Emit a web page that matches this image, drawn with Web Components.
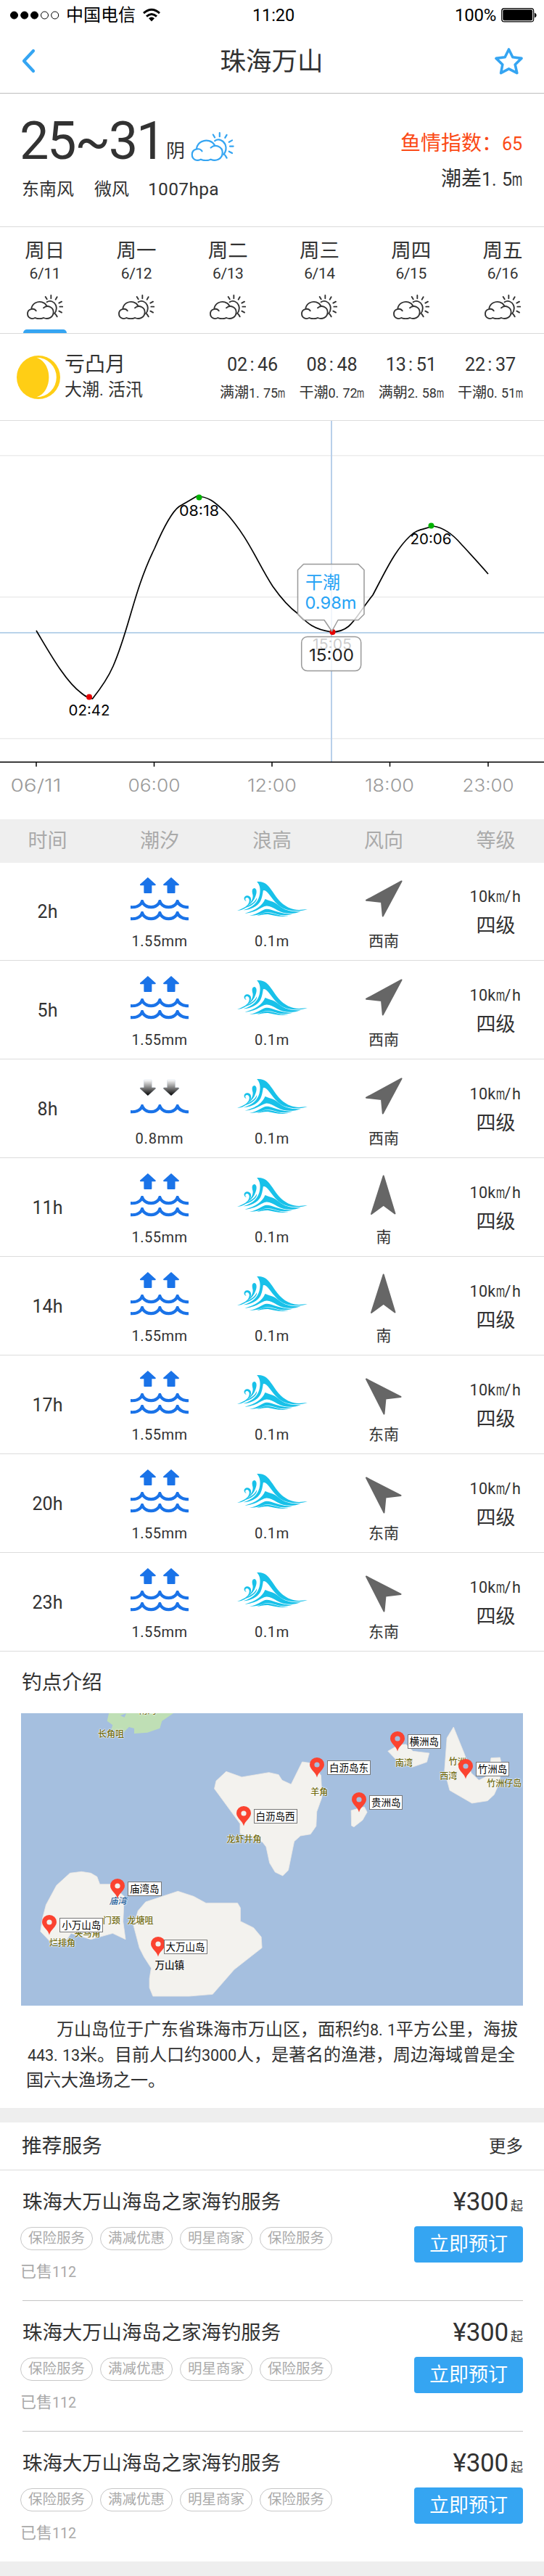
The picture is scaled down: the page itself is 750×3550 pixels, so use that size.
<!DOCTYPE html>
<html lang="zh-CN">
<head>
<meta charset="utf-8">
<title>珠海万山</title>
<style>
html,body{margin:0;padding:0;background:#fff}
body{width:750px;height:3550px;overflow:hidden;font-family:Roboto,"Noto Sans CJK SC",sans-serif;color:#323232}
</style>
</head>
<body>
<tide-page></tide-page>
<script>
const BASE = '*{box-sizing:border-box}svg{display:block}';
const fits = [];
function define(name, render) {
  customElements.define(name, class extends HTMLElement {
    connectedCallback() {
      if (this.shadowRoot) return;
      this.attachShadow({mode: 'open'}).innerHTML = render(this).replace('<style>', '<style>' + BASE);
    }
  });
}

/* Text run: s = size, w = advance width to fit, half = half-width latin glyphs */
customElements.define('ui-text', class extends HTMLElement {
  connectedCallback() {
    if (this.shadowRoot) return;
    const s = +this.getAttribute('s') || 24, c = this.getAttribute('c');
    this.attachShadow({mode: 'open'}).innerHTML =
      `<style>:host{display:block;white-space:pre;font-size:${s}px;line-height:30px;${c ? 'color:' + c : ''}}</style><span><slot></slot></span>`;
    if (this.hasAttribute('half')) {
      const parts = this.textContent.split(/([.:m]|[\x21-\x2d\x2f-\x39\x3b-\x6c\x6e-\x7e]+)/).filter(Boolean);
      this.textContent = '';
      for (const p of parts) {
        if (/^[\x21-\x7e]/.test(p)) {
          const e = document.createElement('span');
          e.textContent = p;
          e.style.fontSize = s * .9 + 'px';
          this.append(e);
          if (p === 'm') {
            e.style.cssText += `;display:inline-block;width:${s / 2}px;transform:scaleX(.64);transform-origin:0 0`;
          } else if (p === ':') {
            e.style.marginLeft = s * .12 + 'px';
            fits.push([e, s * .38, 1]);
          } else fits.push([e, p.length * s / 2, p.length]);
        } else this.append(p);
      }
    } else if (this.hasAttribute('w')) {
      fits.push([this.shadowRoot.querySelector('span'), +this.getAttribute('w'), this.textContent.length, this]);
    }
  }
});

define('status-bar', () => `<style>
:host{display:flex;height:41px;align-items:center;padding:0 10px 0 14px;color:#000}
.l,.r{display:flex;flex:1;align-items:center}.r{justify-content:flex-end;gap:7px}
.wifi{margin-left:10px}.dots{margin-right:9px}
</style>
<div class="l"><svg class="dots" width="68" height="12"><g stroke="#000" stroke-width="1"><circle cx="5.5" cy="6" r="5"/><circle cx="19.7" cy="6" r="5"/><circle cx="33.5" cy="6" r="5"/><circle cx="47.5" cy="6" r="5" fill="none"/><circle cx="61.7" cy="6" r="5" fill="none"/></g></svg>
<ui-text s="24">中国电信</ui-text>
<svg class="wifi" width="24" height="19" viewBox="0 0 24 19" fill="none" stroke="#000" stroke-width="3"><path d="M1 7.2Q12-2.8 23 7.2M5 11.6Q12 5.4 19 11.6"/><path d="M8 14.3Q12 10.8 16 14.3L12 18.6Z" fill="#000" stroke="none"/></svg></div>
<ui-text s="23.5" w="58">11:20</ui-text>
<div class="r"><ui-text s="24" w="57">100%</ui-text>
<svg width="49" height="20" viewBox="0 0 49 20"><rect x=".7" y=".7" width="44" height="18.2" rx="3.5" fill="none" stroke="#000" stroke-width="1.2"/><rect x="2.3" y="2.3" width="40.8" height="15" rx="2" /><path d="M46 6.5Q48.7 7.5 48.7 10T46 13.5Z"/></svg></div>`);

define('nav-bar', () => `<style>
:host{display:flex;height:88px;align-items:center;justify-content:space-between;padding:0 29px 2px 30px;border-bottom:1px solid #bdbdbd}
.t{margin-top:3px}
</style>
<svg width="38" height="34" viewBox="0 0 38 34" fill="none" stroke="#35a5f2" stroke-width="4.2" stroke-linecap="round" stroke-linejoin="round"><path d="M16 3L3 17L16 31"/></svg>
<ui-text class="t" s="35.5">珠海万山</ui-text>
<svg width="40" height="38" viewBox="0 0 40 38" fill="none" stroke="#35a5f2" stroke-width="3.6" stroke-linejoin="round"><path d="M20.5 3L25.8 13.8L38 15.4L29.2 24L31.8 35.6L20.5 29.8L9.6 35.6L11.8 24L3 15.4L15.2 13.8Z"/></svg>`);

define('cloud-icon', el => `<style>:host{display:block;width:50px;height:34px}</style>
<svg width="100%" height="100%" viewBox="78 30 150 102" fill="none" stroke="currentColor" stroke-width="5.6" stroke-linecap="round">
<path d="M116 97C108 84 81 88 81 109C81 128 100 133 112 126C122 131 138 131 147 126C165 134 188 125 188 102C188 82 163 70 147 85M97 87C101 65 124 56 141 61C151 64 157 70 160 76"/>
<path d="M161 61C175 51 192 60 198 74C203 88 200 99 192 109M155 39L161 49M178 33V46M203 40L197 50M222 59L211 65M226 80H214M222 104L211 98M203 121L197 111"/></svg>`);

define('weather-summary', () => `<style>
:host{display:flex;justify-content:space-between;height:184px;padding:38px 30px 0 30px;border-bottom:1px solid #dadada}
.t{display:flex;align-items:flex-end;height:55px}.t ui-text:first-child{line-height:55px;margin-left:-3px}
.y{margin:0 8px -1px 3px;}
cloud-icon{width:60px;height:40px;color:#35a5f2;}
.w{display:flex;margin-top:24px;}
.r{display:flex;flex-direction:column;align-items:flex-end;padding-top:16px;gap:18px}
</style>
<div><div class="t"><ui-text s="72" w="199">25~31</ui-text><ui-text class="y" s="26">阴</ui-text><cloud-icon></cloud-icon></div>
<div class="w"><ui-text s="24" style="width:100px">东南风</ui-text><ui-text s="24" style="width:74px">微风</ui-text><ui-text s="24.5" w="98">1007hpa</ui-text></div></div>
<div class="r"><ui-text s="28" half c="#fb4a16">鱼情指数：65</ui-text><ui-text s="28" half>潮差1.5m</ui-text></div>`);

define('day-tab', el => `<style>
:host{display:flex;flex-direction:column;align-items:center;height:146px;padding-top:18px}
cloud-icon{margin-top:14px}.d{margin-top:1px}
i{display:block;width:60px;height:6px;margin-top:14px;border-radius:5px 5px 0 0;background:${el.hasAttribute('on') ? '#35a5f2' : 'none'}}
</style><ui-text s="27.5"><slot></slot></ui-text><ui-text class="d" s="21" w="42.5">${el.getAttribute('date')}</ui-text><cloud-icon></cloud-icon><i></i>`);

define('day-tabs', () => `<style>
:host{display:block;height:147px;border-bottom:1px solid #dadada;overflow:hidden}
div{display:grid;grid-template-columns:repeat(6,1fr);margin:0 -6px 0 -1.3px}
</style><div>${'日一二三四五'.split('').map((d, i) => `<day-tab date="6/${11 + i}" ${i ? '' : 'on'}>周${d}</day-tab>`).join('')}</div>`);

define('moon-row', () => `<style>
:host{display:flex;height:119px;padding:28px 29px 0 23px}
svg{margin-top:2px}
.n{margin-left:6px;flex:1}.n ui-text+ui-text{margin-top:4px}
.x{display:flex;gap:19.3px}.x div{display:flex;flex-direction:column;align-items:center;gap:8px;margin-top:-1px}
</style>
<svg width="60" height="60" viewBox="0 0 60 60"><circle cx="30" cy="30" r="30" fill="#ffce15"/><path d="M27.500 2.700A27.300 27.300 0 0 1 27.500 57.300C50 50 50 10 27.500 2.700Z" fill="#fff"/></svg>
<div class="n"><ui-text s="28">亏凸月</ui-text><ui-text s="24" half>大潮.活汛</ui-text></div>
<div class="x">${[['02:46', '满潮1.75m'], ['08:48', '干潮0.72m'], ['13:51', '满朝2.58m'], ['22:37', '干潮0.51m']].map(([a, b]) => `<div><ui-text s="28" half>${a}</ui-text><ui-text s="20" half>${b}</ui-text></div>`).join('')}</div>`);

define('tide-chart', () => {
  const lab = (x, y, t, w, s = 20, c = '#000', f = '') => `<text x="${x - w / 2}" y="${y}" font-size="${s}" textLength="${w}" lengthAdjust="spacingAndGlyphs" fill="${c}" ${f}>${t}</text>`;
  return `<style>:host{display:block;height:550px}text{font-family:Inter,"Noto Sans CJK SC",sans-serif}</style>
<svg width="750" height="550" viewBox="0 579 750 550">
<g fill="#ececec"><rect y="579" width="750" height="1" fill="#dcdcdc"/><rect y="627" width="750" height="1.500"/><rect y="822" width="750" height="1.500"/><rect y="1017" width="750" height="1.500"/></g>
<rect y="871" width="750" height="2" fill="#b9d3ea"/><rect x="456" y="580" width="2" height="470" fill="#b8cfea"/>
<path d="M50 869C68 899 90 939 112 955Q119 961 123 961L127.500 963C137 951 149 934 156 918C178 868 184 815 213 756C225 728 236 706 247 698L271 684C288 684 297 693 310 705C343 741 354 774 376 808C390 828 400 838 411 846C423 858 431 867 457 871C485 871 489 851 514 820C531 788 544 759 565 739C575 729 583 730 597 725C612 727 624 736 636 750C648 763 661 777 673 791" fill="none" stroke="#000" stroke-width="1.700" stroke-linejoin="round"/>
<g fill="#00b200"><circle cx="274.500" cy="685.500" r="4"/><circle cx="594.500" cy="724.500" r="4"/></g><g fill="#e60000"><circle cx="123" cy="960.500" r="4"/><circle cx="458.500" cy="871" r="4"/></g>
${lab(123, 986, '02:42', 57)}${lab(274.5, 711, '08:18', 55)}${lab(594, 750, '20:06', 57)}${lab(458, 895, '15:05', 54)}
<g fill="#fff" fill-opacity=".8" stroke="#999" stroke-width="1.500"><path d="M418.500 777.500H494L502 785.500V846.500L494 854.500H466L457.500 870L447 854.500H418.500L410.500 846.500V785.500Z" stroke-linejoin="round"/><rect x="415.700" y="877.500" width="82" height="47" rx="8"/></g>
<text x="421" y="811" font-size="24" fill="#26a3f5">干潮</text>${lab(456, 838.5, '0.98m', 71, 23.5, '#26a3f5')}${lab(457, 910.500, '15:00', 62, 23, '#222')}
<path d="M0 1050.300H750M50 1050V1056.500M212.500 1050V1056.500M375 1050V1056.500M537.500 1050V1056.500M673 1050V1056.500" stroke="#000" stroke-width="1.500" fill="none"/>
${[[49.5, '06/11', 70], [212.5, '06:00', 72], [375, '12:00', 68], [537, '18:00', 68], [673, '23:00', 71]].map(([x, t, w]) => lab(x, 1090.500, t, w, 23.5, '#9a9a9a', 'font-weight="300"')).join('')}
</svg>`;
});

const COLS = 'display:grid;grid-template-columns:131px 178px 132px 176px 133px;justify-items:center;';
define('table-head', () => `<style>:host{${COLS}height:60px;margin-bottom:-1px;align-items:center;background:#efefef;color:#aaa}</style>
${['时间', '潮汐', '浪高', '风向', '等级'].map(t => `<ui-text s="27">${t}</ui-text>`).join('')}`);

const ARROW = 'M101.500 27L134 56Q136 61 130 61H118V90Q118 93 115 93H88Q85 93 85 90V61H73Q67 61 69 56Z';
const SWELL = 'M30 144Q66 148 74 120H82Q90 144 115 144Q139 144 147 120H155Q163 144 187 144Q212 144 220 120H228Q236 144 270 145V156.500Q240 157 224 140Q210 156.500 187 156.500Q165 156.500 151 140Q137 156.500 115 156.500Q92 156.500 78 140Q62 158 30 156.500Z';
define('tide-icon', el => {
  const down = el.hasAttribute('falling');
  const arrows = down
    ? '<defs><linearGradient id="g" x1="0" y1="1" x2="0" y2="0"><stop offset="0" stop-color="#fff"/><stop offset="1" stop-color="#000"/></linearGradient></defs><g fill="url(#g)" stroke="#9db6d6" stroke-width=".6" transform="translate(0 141) scale(1 -1)">'
    : '<g>';
  return `<style>:host{display:block}</style><svg width="80" height="94" viewBox="30 -36 240 282" fill="#1a73e8">
${arrows}<path d="${ARROW}"/><path d="${ARROW}" transform="translate(96.500 0)"/></g>
<path d="${SWELL}" ${down ? 'transform="translate(0 30)"' : ''}/>${down ? '' : `<path d="${SWELL}" transform="translate(0 48)"/>`}</svg>`;
});

define('wave-icon', () => `<style>:host{display:block}</style><svg width="97" height="94" viewBox="475 -36 290 282" fill="#18c1e9">
<path d="M556 45C587 42 602 58 620 85C647 126 675 160 730 162L765 159C740 168 700 170 665 155C640 143 620 115 607 98C598 87 590 78 582 82C579 100 577 113 571 125C560 147 530 161 500 163C540 150 558 132 566 105C572 80 570 60 556 45Z"/>
<path d="M590 117C600 122 625 126 640 139C663 159 690 172 738 168C705 181 668 179 640 163C622 152 606 143 592 146C570 151 555 172 506 176C551 163 576 148 590 117Z"/>
<path d="M597 158C619 158 650 179 704 179C672 187 650 184 633 178C618 173 608 171 597 172C576 174 563 187 525 185C561 180 578 158 597 158Z"/>
<path d="M602 173C630 176 650 189 686 186C658 194 630 185 602 180C584 179 572 185 555 185C572 180 582 172 602 173Z"/>
<path d="M545 72C556 73 557 90 550 106C545 121 535 135 519 144C533 128 541 115 539 100C535 85 535 74 545 72Z"/>
<path d="M514 126C499 124 500 105 514 103C529 101 539 117 526 136C516 153 495 165 475 164C500 156 520 145 524 128C528 114 515 106 509 114C507 119 509 123 514 126Z"/>
<path d="M556 111C558 128 535 149 491 158C524 144 546 133 556 111Z"/></svg>`);

const WIND = {
  '西南': 'M54.500 26.500L6 52.700L27 55L28.800 74.500Z',
  '南': 'M29.700 24.500L13 77L29.700 64.700L45.500 76.500Z',
  '东南': 'M6 32.500L30.500 80.500L32.500 59.500L53.500 57Z'
};
define('wind-icon', el => `<style>:host{display:block}</style><svg width="60" height="94" fill="#666" stroke="#666" stroke-width="2" stroke-linejoin="round"><path d="${WIND[el.getAttribute('dir')]}"/></svg>`);

define('tide-row', el => {
  const a = n => el.getAttribute(n), hour = a('hour'), fall = el.hasAttribute('falling');
  return `<style>:host{${COLS}height:136px;border-bottom:1px solid #dcdcdc;overflow:hidden}
.h{margin-top:54px}.v{padding-top:32px;display:flex;flex-direction:column;align-items:center;gap:10px}</style>
<ui-text class="h" s="25" w="${hour.length > 2 ? 42 : 28}">${hour}</ui-text>
<div><tide-icon ${fall ? 'falling' : ''}></tide-icon><ui-text s="20" w="${fall ? 67 : 77}" style="text-align:center">${fall ? '0.8mm' : '1.55mm'}</ui-text></div>
<div><wave-icon></wave-icon><ui-text s="20" w="48" style="text-align:center">0.1m</ui-text></div>
<div><wind-icon dir="${a('wind')}"></wind-icon><ui-text s="21" style="text-align:center">${a('wind')}</ui-text></div>
<div class="v"><ui-text s="24" half>10km/h</ui-text><ui-text s="27">四级</ui-text></div>`;
});

define('map-pin', el => `<style>
:host{position:absolute;display:block;width:0;height:0}
svg{position:absolute;left:-10px;top:-27px}
span{position:absolute;left:${el.getAttribute('gap') || 14}px;top:-23px;height:20px;border:1px solid #777;background:#fff;font-size:13.5px;line-height:18px;color:#000;padding:0 2px;white-space:nowrap}
</style><svg width="20" height="28" viewBox="0 0 20 28"><path d="M10 27.500C8.500 20 0 16.500 0 9.700A10 9.700 0 0 1 20 9.700C20 16.500 11.500 20 10 27.500Z" fill="#fb4330"/><circle cx="10" cy="10" r="3.600" fill="${el.getAttribute('hole') || '#f3f2ee'}"/></svg><span><slot></slot></span>`);

define('island-map', () => {
  const X = v => ((v - 61) * .4783).toFixed(1), Y = v => ((v - 303) / 3).toFixed(1);
  const names = [[426, 292, '南湾'], [320, 388, '长角咀'], [1165, 508, '南湾'], [1319, 502, '竹洲'], [1293, 562, '西湾'], [1454, 590, '竹洲仔岛'], [921, 626, '羊角'], [704, 823, '龙虾井角'], [322, 1158, '门颈'], [405, 1158, '龙塘咀'], [252, 1212, '夹马角'], [180, 1250, '烂排角']];
  const pins = [[143, 1218, '小万山岛'], [339, 1068, '庙湾岛'], [455, 1308, '大万山岛', 8], [702, 768, '白沥岛西'], [914, 567, '白沥岛东', 14, '#a5bfdf'], [1035, 710, '贵洲岛', 14, '#a5bfdf'], [1145, 460, '横洲岛', 14, '#a5bfdf'], [1342, 573, '竹洲岛', 14, '#a5bfdf']];
  return `<style>
:host{display:block;position:relative;height:403px;overflow:hidden;background:#a5bfdf}
b{position:absolute;transform:translate(-50%,-50%);font:500 12px/16px "Noto Sans CJK SC",sans-serif;color:#6f6a10;white-space:nowrap;text-shadow:0 0 2px #fff,0 0 2px #fff,0 0 1px #fff}
.bay{color:#1f5f9a;font-style:italic}.town{color:#111;font-size:13.5px}
</style>
<svg width="692" height="403" viewBox="61 303 1446 1209" preserveAspectRatio="none" fill="#f3f2ee">
<path d="M314 303L309 335L325 352L321 370L355 385L372 360L387 366V387L425 383L461 365L467 335L500 303Z" fill="#bfdfb5"/><path d="M347 313L364 303L359 320Z" fill="#a5bfdf"/>
<g stroke="#ece9e4" stroke-width="2">
<path d="M652 544L697 567L775 548L803 557L813 580L839 597L871 504L900 510L925 560L928 650L913 710L911 770L895 803L866 810L848 833L831 952L815 975L793 960L777 922L767 855L756 835L692 800V760L618 615L623 583Z"/>
<path d="M202 964L235 958L262 964L280 979L288 1010H318L358 1060L355 1165L362 1238L325 1213L262 1238L205 1213L190 1245L150 1255L117 1205L123 1150L133 1095L163 1015Z"/>
<path d="M420 1083L513 1039L558 1060L594 1088H685L693 1108V1163L731 1190L753 1228L755 1273L675 1363L613 1465L545 1473H441L431 1438V1400L436 1357L415 1310L402 1273L385 1180L398 1120Z"/>
<path d="M1118 460L1150 433L1170 432L1190 460L1237 468L1230 505L1188 526L1145 500Z"/>
<path d="M1307 360L1338 470L1358 550L1380 580L1408 560L1415 488L1441 486L1447 530L1436 600L1424 640L1405 665L1360 675L1296 622L1281 540L1288 405Z"/>
<path d="M1012 705L1050 690L1058 712L1045 745L1020 773L1013 768Z"/></g></svg>
${names.map(([x, y, t]) => `<b style="left:${X(x)}px;top:${Y(y)}px">${t}</b>`).join('')}
<b class="bay" style="left:${X(340)}px;top:${Y(1077)}px">庙湾</b><b class="town" style="left:${X(489)}px;top:${Y(1340)}px">万山镇</b>
${pins.map(([x, y, t, g, h]) => `<map-pin style="left:${X(x)}px;top:${Y(y)}px" ${g ? `gap="${g}"` : ''} ${h ? `hole="${h}"` : ''}>${t}</map-pin>`).join('')}`;
});

define('spot-intro', () => `<style>
:host{display:block;height:629px;padding:28px 29px 0}
.h{margin-left:1px}island-map{margin-top:27px}.p{padding:16px 0 0 7px}.p ui-text{line-height:34px}
</style><ui-text class="h" s="27.7">钓点介绍</ui-text><island-map></island-map>
<div class="p"><ui-text s="24" half style="margin-left:42px">万山岛位于广东省珠海市万山区，面积约8.1平方公里，海拔</ui-text><ui-text s="24" half style="margin-left:2px">443.13米。目前人口约3000人，是著名的渔港，周边海域曾是全</ui-text><ui-text s="24" half>国六大渔场之一。</ui-text></div>`);

define('service-item', el => `<style>
:host{display:block;height:180px;padding:29px 29px 0 28px}
.a,.b{display:flex;justify-content:space-between}
.a{height:48px;margin-left:3px}.p{display:flex;gap:3px}.p ui-text+ui-text{margin-top:5px}
.g{display:flex;gap:10px;margin-top:1px}
.g span{width:100px;height:32px;border:1px solid #c8c8c8;border-radius:16px;display:flex;justify-content:center;align-items:center}
button{all:unset;display:flex;align-items:center;justify-content:center;width:150px;height:50px;border-radius:4px;background:#35a5f2}
.s{margin-top:-2px}
hr{border:0;margin:23px 0 0 3px;height:1px;background:${el.hasAttribute('last') ? 'none' : '#c4c4c4'}}
</style>
<div class="a"><ui-text s="27.4"><slot></slot></ui-text><div class="p"><ui-text s="35" w="76.500">¥300</ui-text><ui-text s="17">起</ui-text></div></div>
<div class="b"><div class="g">${['保险服务', '满减优惠', '明星商家', '保险服务'].map(t => `<span><ui-text s="19.500" c="#aaa">${t}</ui-text></span>`).join('')}</div>
<button><ui-text s="27" c="#fff">立即预订</ui-text></button></div>
<ui-text class="s" s="22" half c="#aaa">已售112</ui-text><hr>`);

define('service-list', () => `<style>
:host{display:block;border-top:20px solid #eee;border-bottom:20px solid #eee;height:645px;overflow:hidden}
.h{display:flex;justify-content:space-between;align-items:center;height:66px;padding:1px 29px 0 30px;border-bottom:1px solid #dcdcdc}
</style><div class="h"><ui-text s="27.700">推荐服务</ui-text><ui-text s="23.500">更多</ui-text></div>
${['', '', 'last'].map(l => `<service-item ${l}>珠海大万山海岛之家海钓服务</service-item>`).join('')}`);

define('tide-page', () => `<style>:host{display:block;width:750px;height:3550px;overflow:hidden;background:#fff}</style>
<status-bar></status-bar><nav-bar></nav-bar><weather-summary></weather-summary><day-tabs></day-tabs><moon-row></moon-row>
<tide-chart></tide-chart><table-head></table-head>
${[['2h', '西南'], ['5h', '西南'], ['8h', '西南', 'falling'], ['11h', '南'], ['14h', '南'], ['17h', '东南'], ['20h', '东南'], ['23h', '东南']].map(([h, w, f]) => `<tide-row hour="${h}" wind="${w}" ${f || ''}></tide-row>`).join('')}
<spot-intro></spot-intro><service-list></service-list>`);

for (const [el, w, n, host] of fits) {
  const sp = (w - el.getBoundingClientRect().width) / n;
  (host || el).style.letterSpacing = sp.toFixed(3) + 'px';
}
</script>
</body>
</html>
